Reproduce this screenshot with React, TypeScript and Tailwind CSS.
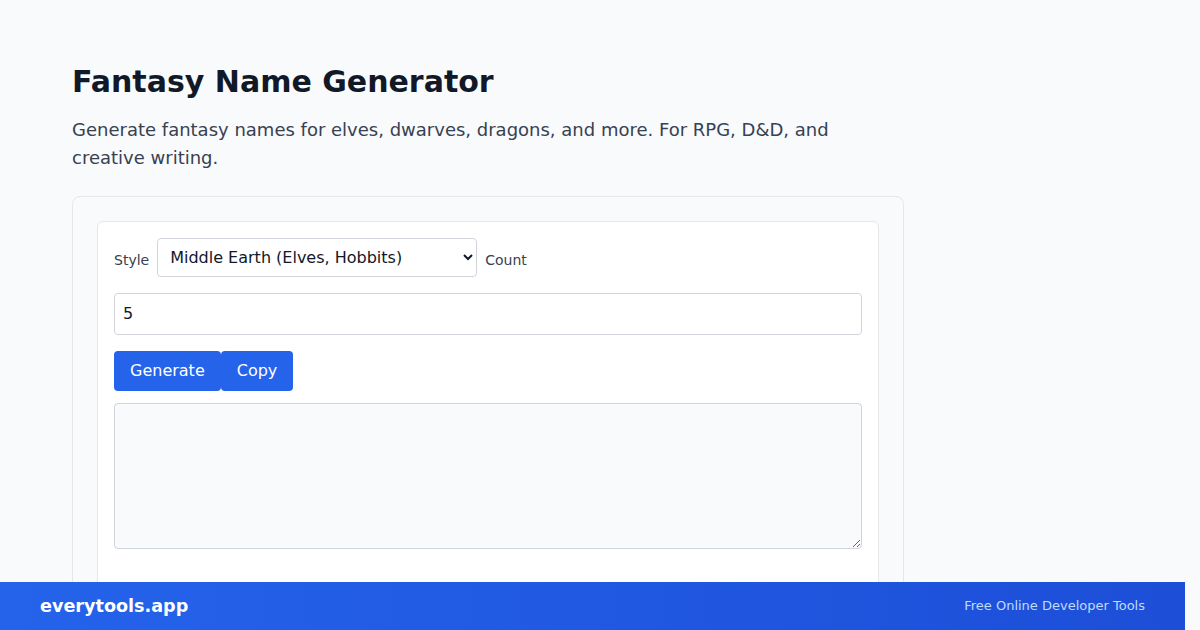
import { useState } from "react";

const STYLES = [
  "Middle Earth (Elves, Hobbits)",
  "Dwarven",
  "Draconic",
  "Orcish",
  "Celestial",
];

const FantasyNameGenerator = () => {
  const [style, setStyle] = useState(STYLES[0]);
  const [count, setCount] = useState("5");
  const [output, setOutput] = useState("");

  return (
    <div className="relative h-[630px] overflow-hidden bg-[#f8fafc] font-['DejaVu_Sans',sans-serif]">
      <main className="w-[904px] pl-[72px] pt-16">
        <h1 className="text-[30px] leading-9 font-bold text-[#111827]">Fantasy Name Generator</h1>
        <p className="mt-4 text-lg leading-7 text-[#374151]">
          Generate fantasy names for elves, dwarves, dragons, and more. For RPG, D&amp;D, and creative writing.
        </p>

        <section className="mt-6 rounded-lg border border-[#e5e7eb] bg-[#f8fafc] p-6">
          <div className="rounded-md border border-[#e5e7eb] bg-white p-4 pb-10">
            <div className="flex flex-wrap items-center gap-x-2 gap-y-4">
              <label className="mt-1 text-sm text-[#374151]">Style</label>
              <select
                value={style}
                onChange={(e) => setStyle(e.target.value)}
                className="h-[39px] w-[320px] rounded border border-[#d1d5db] bg-white px-2 text-base text-[#111827]"
              >
                {STYLES.map((s) => (
                  <option key={s}>{s}</option>
                ))}
              </select>
              <label className="mt-1 text-sm text-[#374151]">Count</label>
              <input
                value={count}
                onChange={(e) => setCount(e.target.value)}
                className="w-full rounded border border-[#d1d5db] bg-white px-2 py-2 text-base leading-6 text-[#111827]"
              />
            </div>

            <div className="mt-4 flex">
              <button className="rounded bg-[#2563eb] px-4 py-2 text-base leading-6 text-white">Generate</button>
              <button className="rounded bg-[#2563eb] px-4 py-2 text-base leading-6 text-white">Copy</button>
            </div>

            <textarea
              value={output}
              onChange={(e) => setOutput(e.target.value)}
              className="mt-3 block h-[146px] w-full rounded border border-[#d1d5db] bg-[#f9fafb] p-2 text-base"
            />
          </div>
        </section>
      </main>

      <footer className="absolute bottom-0 left-0 flex h-12 w-[1185px] items-center justify-between bg-linear-to-r from-[#2563eb] to-[#1d4ed8] px-10">
        <span className="text-[17.6px] font-bold text-white">everytools.app</span>
        <span className="text-[13px] text-[#bfdbfe]">Free Online Developer Tools</span>
      </footer>
    </div>
  );
};

export default function App() {
  return <FantasyNameGenerator />;
}
